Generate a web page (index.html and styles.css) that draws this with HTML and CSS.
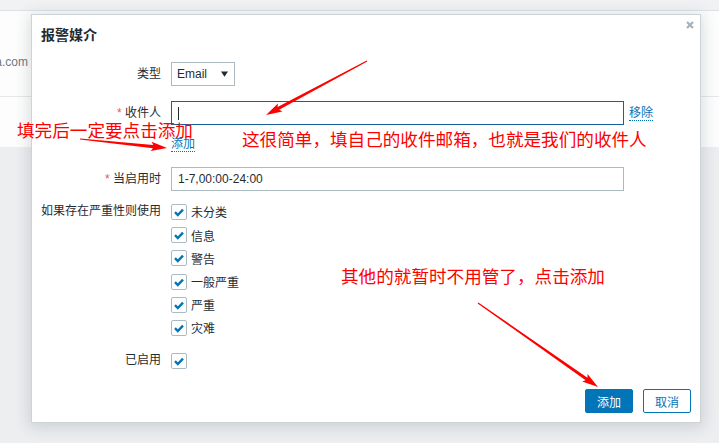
FILE: index.html
```html
<!DOCTYPE html>
<html lang="zh">
<head>
<meta charset="utf-8">
<title>报警媒介</title>
<link rel="stylesheet" href="styles.css">
</head>
<body>
<div class="page">
  <div class="topbar"></div>
  <div class="panel">
    <div class="prow">
      <div class="pcell"><span>zabbix@zabbixa.com</span></div>
    </div>
  </div>
</div>

<div class="dialog">
  <div class="dlg-head">
    <h4 class="dlg-title">报警媒介</h4>
    <svg class="dlg-close" width="8" height="8" viewBox="0 0 8 8"><path d="M1 1L7 7M7 1L1 7" stroke="#a6b2b9" stroke-width="2.2"/></svg>
  </div>

  <div class="form">
    <div class="row">
      <div class="lbl">类型</div>
      <div class="ctl">
        <div class="select"><span>Email</span><svg width="8" height="6" viewBox="0 0 8 6"><path d="M0 0H8L4 6Z" fill="#1f2c33"/></svg></div>
      </div>
    </div>

    <div class="row row-to">
      <div class="lbl"><span class="ast">*</span> 收件人</div>
      <div class="ctl">
        <div class="inline">
          <div class="input focus"><span class="caret"></span></div>
          <a class="link">移除</a>
        </div>
        <a class="link add-link">添加</a>
      </div>
    </div>

    <div class="row row-when">
      <div class="lbl"><span class="ast">*</span> 当启用时</div>
      <div class="ctl">
        <div class="input">1-7,00:00-24:00</div>
      </div>
    </div>

    <div class="row row-sev">
      <div class="lbl lbl-list">如果存在严重性则使用</div>
      <ul class="checks">
        <li><span class="cb"><svg width="14" height="14" viewBox="0 0 14 14"><path d="M3 7.2L5.8 10L11 4.6" fill="none" stroke="#0275b8" stroke-width="2.4"/></svg></span>未分类</li>
        <li><span class="cb"><svg width="14" height="14" viewBox="0 0 14 14"><path d="M3 7.2L5.8 10L11 4.6" fill="none" stroke="#0275b8" stroke-width="2.4"/></svg></span>信息</li>
        <li><span class="cb"><svg width="14" height="14" viewBox="0 0 14 14"><path d="M3 7.2L5.8 10L11 4.6" fill="none" stroke="#0275b8" stroke-width="2.4"/></svg></span>警告</li>
        <li><span class="cb"><svg width="14" height="14" viewBox="0 0 14 14"><path d="M3 7.2L5.8 10L11 4.6" fill="none" stroke="#0275b8" stroke-width="2.4"/></svg></span>一般严重</li>
        <li><span class="cb"><svg width="14" height="14" viewBox="0 0 14 14"><path d="M3 7.2L5.8 10L11 4.6" fill="none" stroke="#0275b8" stroke-width="2.4"/></svg></span>严重</li>
        <li><span class="cb"><svg width="14" height="14" viewBox="0 0 14 14"><path d="M3 7.2L5.8 10L11 4.6" fill="none" stroke="#0275b8" stroke-width="2.4"/></svg></span>灾难</li>
      </ul>
    </div>

    <div class="row row-enabled">
      <div class="lbl lbl-list">已启用</div>
      <ul class="checks">
        <li><span class="cb"><svg width="14" height="14" viewBox="0 0 14 14"><path d="M3 7.2L5.8 10L11 4.6" fill="none" stroke="#0275b8" stroke-width="2.4"/></svg></span></li>
      </ul>
    </div>
  </div>

  <div class="dlg-foot">
    <button class="btn primary">添加</button>
    <button class="btn alt">取消</button>
  </div>
</div>

<svg class="arrows" width="719" height="443" viewBox="0 0 719 443">
  <g transform="translate(367 61) rotate(151.87)"><polygon points="0,-0.6 100.5,-1.6 98.5,-4.6 114.5,0 98.5,4.6 100.5,1.6 0,0.6" fill="#ff0000"/></g>
  <g transform="translate(80 139) rotate(5.9)"><polygon points="0,-0.6 73.5,-1.6 71.5,-4.6 87.5,0 71.5,4.6 73.5,1.6 0,0.6" fill="#ff0000"/></g>
  <g transform="translate(478 303) rotate(35)"><polygon points="0,-0.6 132.5,-1.6 130.5,-4.6 146.5,0 130.5,4.6 132.5,1.6 0,0.6" fill="#ff0000"/></g>
</svg>
<div class="note n1">填完后一定要点击添加</div>
<div class="note n2">这很简单，填自己的收件邮箱，也就是我们的收件人</div>
<div class="note n3">其他的就暂时不用管了，点击添加</div>
</body>
</html>
```

FILE: styles.css
```css
html, body {
  margin: 0;
  padding: 0;
}
body {
  width: 719px;
  height: 443px;
  overflow: hidden;
  background: #eceef0;
  font-family: "Liberation Sans", Arial, "Noto Sans CJK SC", sans-serif;
  font-size: 12px;
  color: #1f2c33;
  position: relative;
}
.page {
  width: 719px;
}
.topbar {
  height: 10px;
  background: #f1f2f3;
  border-bottom: 1px solid #dde2e5;
}
.panel {
  height: 136px;
  background: #fdfdfd;
}
.prow {
  height: 85px;
  border-bottom: 1px solid #e4e8ea;
}
.pcell {
  width: 28px;
  overflow: hidden;
  display: flex;
  justify-content: flex-end;
  padding-top: 44px;
  white-space: nowrap;
  color: #6d7a82;
  font-size: 12px;
  line-height: 14px;
}

.dialog {
  position: absolute;
  left: 31px;
  top: 14px;
  width: 670px;
  height: 409px;
  box-sizing: border-box;
  background: #fff;
  border: 1px solid #cdd4d8;
  box-shadow: 0 2px 14px 2px rgba(40, 55, 65, 0.16);
  display: flex;
  flex-direction: column;
}
.dlg-head {
  display: flex;
  justify-content: space-between;
  align-items: flex-start;
  padding: 12px 6px 0 9px;
}
.dlg-title {
  margin: 0;
  font-size: 14px;
  line-height: 16px;
  font-weight: bold;
  color: #1f2c33;
}
.dlg-close {
  margin-top: -6px;
  display: block;
}

.form {
  padding-top: 19px;
}
.row {
  display: grid;
  grid-template-columns: 129px 1fr;
  column-gap: 10px;
  align-items: start;
}
.lbl {
  text-align: right;
  line-height: 24px;
  white-space: nowrap;
}
.lbl-list {
  line-height: 23.2px;
}
.ast {
  color: #e45959;
}
.row-to {
  margin-top: 15px;
}
.row-when {
  margin-top: 15px;
}
.row-sev {
  margin-top: 9.4px;
}
.row-enabled {
  margin-top: 9.8px;
}

.select {
  width: 64px;
  height: 24px;
  box-sizing: border-box;
  border: 1px solid #acbbc2;
  display: flex;
  align-items: center;
  padding: 0 6px 0 5px;
  font-size: 12px;
}
.select svg {
  margin-left: auto;
  width: 7px;
  height: 6px;
}

.inline {
  display: flex;
  align-items: center;
  gap: 5px;
}
.input {
  width: 453px;
  height: 24px;
  box-sizing: border-box;
  border: 1px solid #acbbc2;
  padding: 0 6px;
  line-height: 22px;
  font-size: 12px;
  display: flex;
  align-items: center;
}
.input.focus {
  border-color: #17609a;
}
.caret {
  width: 1px;
  height: 13px;
  background: #1f2c33;
}
.link {
  color: #0275b8;
  border-bottom: 1px dotted #0275b8;
  line-height: 14px;
  display: inline-block;
  cursor: pointer;
}
.add-link {
  margin-top: 12px;
}

.checks {
  list-style: none;
  margin: 0;
  padding: 0;
}
.checks li {
  height: 23.2px;
  display: flex;
  align-items: center;
}
.cb {
  width: 16px;
  height: 16px;
  box-sizing: border-box;
  border: 1px solid #acbbc2;
  border-radius: 2px;
  background: #fff;
  margin-right: 4px;
  display: flex;
  align-items: center;
  justify-content: center;
}
.cb svg {
  display: block;
}

.dlg-foot {
  margin-top: auto;
  display: flex;
  justify-content: flex-end;
  gap: 10px;
  padding: 0 9px 9px 0;
}
.btn {
  width: 48px;
  height: 24px;
  box-sizing: border-box;
  border-radius: 2px;
  font-family: "Liberation Sans", Arial, "Noto Sans CJK SC", sans-serif;
  font-size: 12px;
  padding: 0;
  cursor: pointer;
}
.btn.primary {
  background: #0275b8;
  border: 1px solid #0275b8;
  color: #fff;
}
.btn.alt {
  background: #fff;
  border: 1px solid #0275b8;
  color: #0275b8;
}

.arrows {
  position: absolute;
  left: 0;
  top: 0;
  pointer-events: none;
}
.note {
  position: absolute;
  font-family: "Noto Sans CJK SC", sans-serif;
  font-size: 17.6px;
  line-height: 17.6px;
  color: #ff0000;
  white-space: nowrap;
  pointer-events: none;
}
.n1 {
  left: 17px;
  top: 121px;
}
.n2 {
  left: 242px;
  top: 130px;
}
.n3 {
  left: 341px;
  top: 267px;
}
```
